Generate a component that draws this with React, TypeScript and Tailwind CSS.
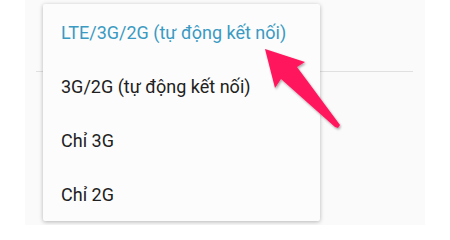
import React from "react";

const items = [
  { label: "LTE/3G/2G (tự động kết nối)", active: true },
  { label: "3G/2G (tự động kết nối)", active: false },
  { label: "Chỉ 3G", active: false },
  { label: "Chỉ 2G", active: false },
];

export default function App() {
  return (
    <div
      className="w-[450px] h-[225px] bg-white flex overflow-hidden"
      style={{ fontFamily: "Roboto, 'Noto Sans', sans-serif" }}
    >
      <div className="ml-[25px] w-[400px] h-full bg-[#fafafa] relative">
        <div className="pt-[71px] pl-[11px] pr-[12px]">
          <div className="h-px bg-[#e0e0e0]" />
        </div>

        <div className="absolute left-[18px] top-[4px] w-[277px] h-[217px] bg-[#fcfcfc] rounded-[2px] shadow-[0_1px_4px_rgba(0,0,0,0.28)] pt-[1px] flex flex-col">
          {items.map((it) => (
            <div
              key={it.label}
              className={
                "h-[54px] flex items-center pl-[18px] text-[18px] " +
                (it.active ? "text-[#3a9ac2]" : "text-[#212121]")
              }
            >
              {it.label}
            </div>
          ))}
        </div>

        <svg
          className="absolute left-0 top-0"
          width="400"
          height="225"
          viewBox="25 0 400 225"
        >
          <defs>
            <filter id="sh" x="-20%" y="-20%" width="140%" height="140%">
              <feDropShadow dx="1" dy="1.5" stdDeviation="1.2" floodColor="#000" floodOpacity="0.35" />
            </filter>
          </defs>
          <polygon
            points="265,49 305,62 297,67 340,125 338,128 335,127 281,79 275,88"
            fill="#ff165d"
            filter="url(#sh)"
          />
        </svg>
      </div>
    </div>
  );
}
